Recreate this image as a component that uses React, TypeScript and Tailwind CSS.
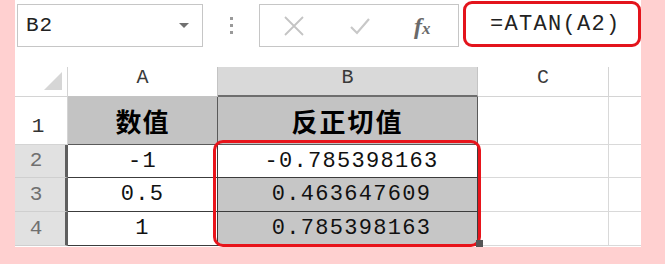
import React from 'react';

const mono = { fontFamily: '"Liberation Mono", "DejaVu Sans Mono", monospace' };
const cjk = { fontFamily: '"Noto Sans CJK SC", "Noto Sans", sans-serif' };

interface DataRow {
  row: string;
  value: string;
  result: string;
}

const rows: DataRow[] = [
  { row: '2', value: '-1', result: '-0.785398163' },
  { row: '3', value: '0.5', result: '0.463647609' },
  { row: '4', value: '1', result: '0.785398163' },
];

const FormulaBar: React.FC = () => {
  return (
    <div className="flex items-start h-[65px]">
      {/* Name box */}
      <div className="ml-[2px] mt-[4px] w-[186px] h-[43px] border border-[#c6c6c6] flex items-center justify-between pl-[8px] pr-[13px]">
        <span className="text-[21px] text-[#222] tracking-[1px]" style={mono}>B2</span>
        <span className="w-0 h-0 border-l-[5px] border-r-[5px] border-t-[5px] border-l-transparent border-r-transparent border-t-[#707070]" />
      </div>

      {/* Colon dots */}
      <div className="w-[56px] h-[43px] mt-[4px] flex flex-col items-center justify-center gap-[4px]">
        <span className="w-[3px] h-[3px] bg-[#9a9a9a]" />
        <span className="w-[3px] h-[3px] bg-[#9a9a9a]" />
        <span className="w-[3px] h-[3px] bg-[#9a9a9a]" />
      </div>

      {/* Cancel / enter / fx */}
      <div className="mt-[4px] w-[200px] h-[43px] border border-[#c6c6c6] flex items-center">
        <svg className="ml-[23px]" width="22" height="20" viewBox="0 0 22 20">
          <path d="M2 1 L20 19 M20 1 L2 19" stroke="#c4c4c4" strokeWidth="1.8" fill="none" />
        </svg>
        <svg className="ml-[44px]" width="22" height="18" viewBox="0 0 22 18">
          <path d="M2 10 L8 16 L20 2" stroke="#c8c8c8" strokeWidth="2.2" fill="none" />
        </svg>
        <span
          className="ml-[43px] text-[24px] italic font-bold text-[#6a6a6a] leading-none"
          style={{ fontFamily: '"Liberation Serif", serif' }}
        >
          f<span className="text-[17px]">x</span>
        </span>
      </div>

      {/* Formula content */}
      <div className="ml-[4px] mt-[1px] w-[178px] h-[46px] border-[3px] border-[#e3141c] rounded-[9px] flex items-center pl-[24px]">
        <span className="text-[22px] text-[#222] tracking-[1.3px]" style={mono}>=ATAN(A2)</span>
      </div>
    </div>
  );
};

const Sheet: React.FC = () => {
  return (
    <div className="relative">
      <div className="grid grid-cols-[53px_150px_260px_131px_32px] grid-rows-[32px_48px_33px_34px_34px]">
        {/* Column headers */}
        <div className="relative border-r border-b border-[#d4d4d4] mt-[2px]">
          <svg className="absolute right-[5px] bottom-[6px]" width="18" height="18" viewBox="0 0 18 18">
            <path d="M18 0 L18 18 L0 18 Z" fill="#d6d6d6" />
          </svg>
        </div>
        <div className="mt-[2px] border-r border-b border-[#c4c4c4] flex items-end justify-center pb-[3px] text-[20px] text-[#3a3a3a]" style={mono}>A</div>
        <div className="mt-[2px] bg-[#d9d9d9] border-r border-[#c4c4c4] border-b-[2px] border-b-[#6e6e6e] flex items-end justify-center pb-[2px] text-[20px] text-[#3a3a3a]" style={mono}>B</div>
        <div className="mt-[2px] border-r border-b border-[#d4d4d4] flex items-end justify-center pb-[3px] text-[20px] text-[#3a3a3a]" style={mono}>C</div>
        <div className="mt-[2px] border-b border-[#d4d4d4]" />

        {/* Row 1 */}
        <div className="border-r border-b border-[#d4d4d4] flex items-end justify-center pr-[6px] pb-[2px] text-[21px] text-[#333]" style={mono}>1</div>
        <div className="bg-[#c3c3c3] border-r border-b border-[#5a5a5a] flex items-center justify-center text-[26px] font-bold text-black tracking-[1px]" style={cjk}>数值</div>
        <div className="bg-[#c3c3c3] border-r border-b border-[#5a5a5a] flex items-center justify-center text-[26px] font-bold text-black tracking-[2px]" style={cjk}>反正切值</div>
        <div className="border-r border-b border-[#d9d9d9]" />
        <div className="border-b border-[#d9d9d9]" />

        {/* Data rows */}
        {rows.map((r, i) => (
          <React.Fragment key={r.row}>
            <div className="bg-[#e1e1e1] border-r-[3px] border-r-[#5f5f5f] border-b border-b-[#cfcfcf] flex items-center justify-center pr-[8px] text-[21px] text-[#707070]" style={mono}>
              {r.row}
            </div>
            <div className="bg-white border-r border-b border-[#3c3c3c] flex items-center justify-center text-[22px] text-[#111] tracking-[1.3px]" style={mono}>
              {r.value}
            </div>
            <div
              className={`${i === 0 ? 'bg-white' : 'bg-[#c6c6c6]'} border-r border-b border-[#3c3c3c] flex items-center justify-center pl-[8px] text-[22px] text-[#111] tracking-[1.3px]`}
              style={mono}
            >
              {r.result}
            </div>
            <div className="border-r border-b border-[#d9d9d9]" />
            <div className="border-b border-[#d9d9d9]" />
          </React.Fragment>
        ))}
      </div>

      {/* Red highlight around B2:B4 */}
      <div className="absolute left-[198px] top-[75px] w-[268px] h-[107px] border-[3px] border-[#e8141b] rounded-[10px]" />
      {/* Fill handle */}
      <div className="absolute left-[461px] top-[175px] w-[7px] h-[7px] bg-[#555]" />
    </div>
  );
};

const App: React.FC = () => {
  return (
    <div className="w-[665px] h-[264px] bg-[#ffd0d0] overflow-hidden">
      <div className="ml-[15px] w-[626px] h-[247px] bg-white overflow-hidden">
        <FormulaBar />
        <Sheet />
      </div>
    </div>
  );
};

export default App;
